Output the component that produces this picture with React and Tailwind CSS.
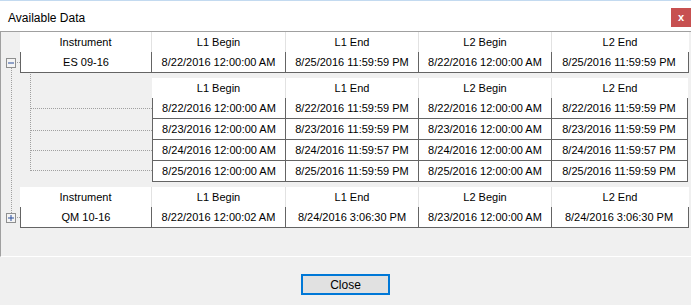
import React from 'react';

const mainCols = [132, 134, 133, 133, 136];
const subCols = [134, 133, 133, 136];
const heads = ['L1 Begin', 'L1 End', 'L2 Begin', 'L2 End'];

const instruments = [
  {
    name: 'ES 09-16',
    row: ['8/22/2016 12:00:00 AM', '8/25/2016 11:59:59 PM', '8/22/2016 12:00:00 AM', '8/25/2016 11:59:59 PM'],
    children: [
      ['8/22/2016 12:00:00 AM', '8/22/2016 11:59:59 PM', '8/22/2016 12:00:00 AM', '8/22/2016 11:59:59 PM'],
      ['8/23/2016 12:00:00 AM', '8/23/2016 11:59:59 PM', '8/23/2016 12:00:00 AM', '8/23/2016 11:59:59 PM'],
      ['8/24/2016 12:00:00 AM', '8/24/2016 11:59:57 PM', '8/24/2016 12:00:00 AM', '8/24/2016 11:59:57 PM'],
      ['8/25/2016 12:00:00 AM', '8/25/2016 11:59:59 PM', '8/25/2016 12:00:00 AM', '8/25/2016 11:59:59 PM'],
    ],
  },
  {
    name: 'QM 10-16',
    row: ['8/22/2016 12:00:02 AM', '8/24/2016 3:06:30 PM', '8/23/2016 12:00:00 AM', '8/24/2016 3:06:30 PM'],
  },
];

function HeaderRow({ cols, labels }) {
  return (
    <div className="flex h-[20px] bg-white">
      {labels.map((l, i) => (
        <div
          key={i}
          style={{ width: cols[i] }}
          className={`flex items-center justify-center ${i < labels.length - 1 ? 'border-r border-[#e2e2e2]' : ''}`}
        >
          {l}
        </div>
      ))}
    </div>
  );
}

function DataRow({ cols, cells }) {
  return (
    <div className="flex h-[21px] bg-white border-l border-r border-b border-[#646464]">
      {cells.map((c, i) => (
        <div
          key={i}
          style={{ width: i === 0 ? cols[i] - 1 : i === cells.length - 1 ? cols[i] - 2 : cols[i] }}
          className={`flex items-center justify-center ${i < cells.length - 1 ? 'border-r border-[#646464]' : ''}`}
        >
          {c}
        </div>
      ))}
    </div>
  );
}

function ExpandBox({ x, y, open }) {
  return (
    <g>
      <rect x={x + 0.5} y={y + 0.5} width="9" height="9" fill="#f4f4f4" stroke="#8e8f8f" />
      <line x1={x + 2} y1={y + 5} x2={x + 8} y2={y + 5} stroke="#2b4f9c" strokeWidth="1" />
      {!open && <line x1={x + 5} y1={y + 2} x2={x + 5} y2={y + 8} stroke="#2b4f9c" strokeWidth="1" />}
    </g>
  );
}

export default function App() {
  const [es, qm] = instruments;
  return (
    <div className="w-[691px] h-[305px] bg-[#f0f0f0] flex flex-col overflow-hidden text-black" style={{ fontFamily: '"Liberation Sans", Arial, sans-serif' }}>
      <div className="h-[31px] bg-white border-t border-[#c3daf0] flex items-start justify-between">
        <div className="text-[12px] pl-[8px] pt-[8px]">Available Data</div>
        <div className="w-[20px] h-[19px] mt-[7px] bg-[#c75050] text-white text-[11px] font-bold flex items-center justify-center">x</div>
      </div>

      <div className="relative h-[226px] border-l border-t border-b border-l-[#a0a0a0] border-t-[#a0a0a0] border-b-white pl-[19px] flex flex-col gap-[5px] text-[11px]">
        <svg className="absolute left-0 top-0 pointer-events-none" width="160" height="226">
          <g stroke="#a0a0a0" strokeDasharray="1 1">
            <line x1="10.5" y1="36" x2="10.5" y2="181" />
            <line x1="16" y1="30.5" x2="20" y2="30.5" />
            <line x1="16" y1="185.5" x2="20" y2="185.5" />
            <line x1="29.5" y1="42" x2="29.5" y2="139" />
            <line x1="30" y1="76.5" x2="152" y2="76.5" />
            <line x1="30" y1="98.5" x2="152" y2="98.5" />
            <line x1="30" y1="118.5" x2="152" y2="118.5" />
            <line x1="30" y1="138.5" x2="152" y2="138.5" />
          </g>
          <ExpandBox x={5} y={26} open />
          <ExpandBox x={5} y={181} open={false} />
        </svg>

        <div className="w-[669px]">
          <HeaderRow cols={mainCols} labels={['Instrument', ...heads]} />
          <DataRow cols={mainCols} cells={[es.name, ...es.row]} />
        </div>

        <div className="w-[536px] ml-[132px]">
          <HeaderRow cols={subCols} labels={heads} />
          {es.children.map((r, i) => (
            <DataRow key={i} cols={subCols} cells={r} />
          ))}
        </div>

        <div className="w-[669px]">
          <HeaderRow cols={mainCols} labels={['Instrument', ...heads]} />
          <DataRow cols={mainCols} cells={[qm.name, ...qm.row]} />
        </div>
      </div>

      <div className="flex justify-center pt-[17px]">
        <button className="w-[89px] h-[21px] border-2 border-[#0078d7] bg-[#e1e1e1] text-[12px] flex items-center justify-center">
          Close
        </button>
      </div>
    </div>
  );
}
